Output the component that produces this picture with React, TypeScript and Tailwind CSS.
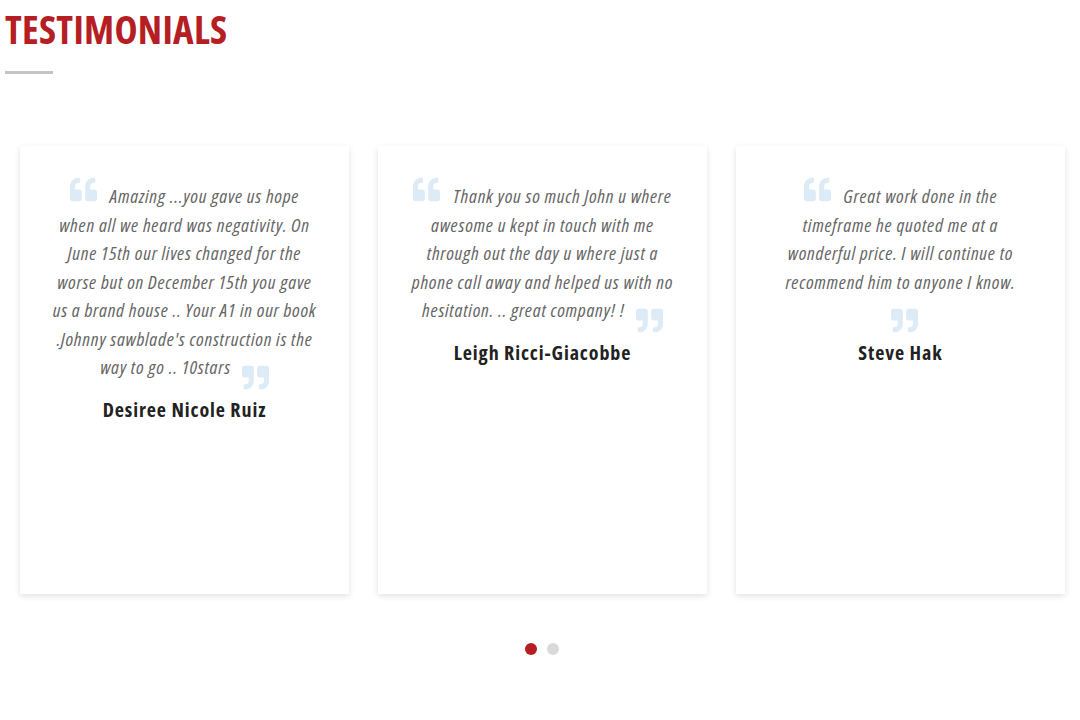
import React from 'react';
import { FaQuoteLeft, FaQuoteRight } from 'react-icons/fa';

const testimonials = [
    {
        text: "Amazing ...you gave us hope when all we heard was negativity. On June 15th our lives changed for the worse but on December 15th you gave us a brand house .. Your A1 in our book .Johnny sawblade's construction is the way to go .. 10stars",
        name: 'Desiree Nicole Ruiz',
    },
    {
        text: 'Thank you so much John u where awesome u kept in touch with me through out the day u where just a phone call away and helped us with no hesitation. .. great company! !',
        name: 'Leigh Ricci-Giacobbe',
    },
    {
        text: 'Great work done in the timeframe he quoted me at a wonderful price. I will continue to recommend him to anyone I know.',
        name: 'Steve Hak',
    },
];

function TestimonialCard({ text, name }: { text: string; name: string }) {
    return (
        <div className="h-[448px] bg-white px-[32px] pt-[36px] text-center shadow-[0_2px_6px_rgba(0,0,0,0.12)]">
            <p className="text-[19px] leading-[28.5px] tracking-[0.75px] text-[#666] italic font-stretch-condensed">
                <FaQuoteLeft className="relative top-[-6px] mr-[13px] inline-block h-[27px] w-[27px] align-top text-[#dcebf6]" />
                {text}{' '}
                <FaQuoteRight className="relative top-[11px] ml-[7px] inline-block h-[27px] w-[27px] align-top text-[#dcebf6]" />
            </p>
            <h3 className="mt-[14px] text-[20px] leading-[28px] tracking-[0.9px] font-bold text-[#222] font-stretch-condensed">
                {name}
            </h3>
        </div>
    );
}

export default function App() {
    return (
        <div
            className="h-[720px] w-[1080px] bg-white"
            style={{ fontFamily: '"Open Sans", "Liberation Sans", sans-serif' }}
        >
            {/* Heading */}
            <div className="px-[5px] pt-[6px]">
                <h2 className="text-[39px] leading-[46px] font-bold tracking-[0.3px] text-[#b51f24] font-stretch-condensed">
                    TESTIMONIALS
                </h2>
                <div className="mt-[19px] h-[3px] w-[48px] bg-[#c4c4c4]" />
            </div>

            {/* Cards */}
            <div className="mt-[72px] grid grid-cols-3 gap-[29px] px-[20px] pr-[15px]">
                {testimonials.map((t) => (
                    <TestimonialCard key={t.name} text={t.text} name={t.name} />
                ))}
            </div>

            {/* Dots */}
            <div className="mt-[49px] flex justify-center gap-[10px] pl-[4px]">
                <span className="h-[12px] w-[12px] rounded-full bg-[#b51f24]" />
                <span className="h-[12px] w-[12px] rounded-full bg-[#dadada]" />
            </div>
        </div>
    );
}
